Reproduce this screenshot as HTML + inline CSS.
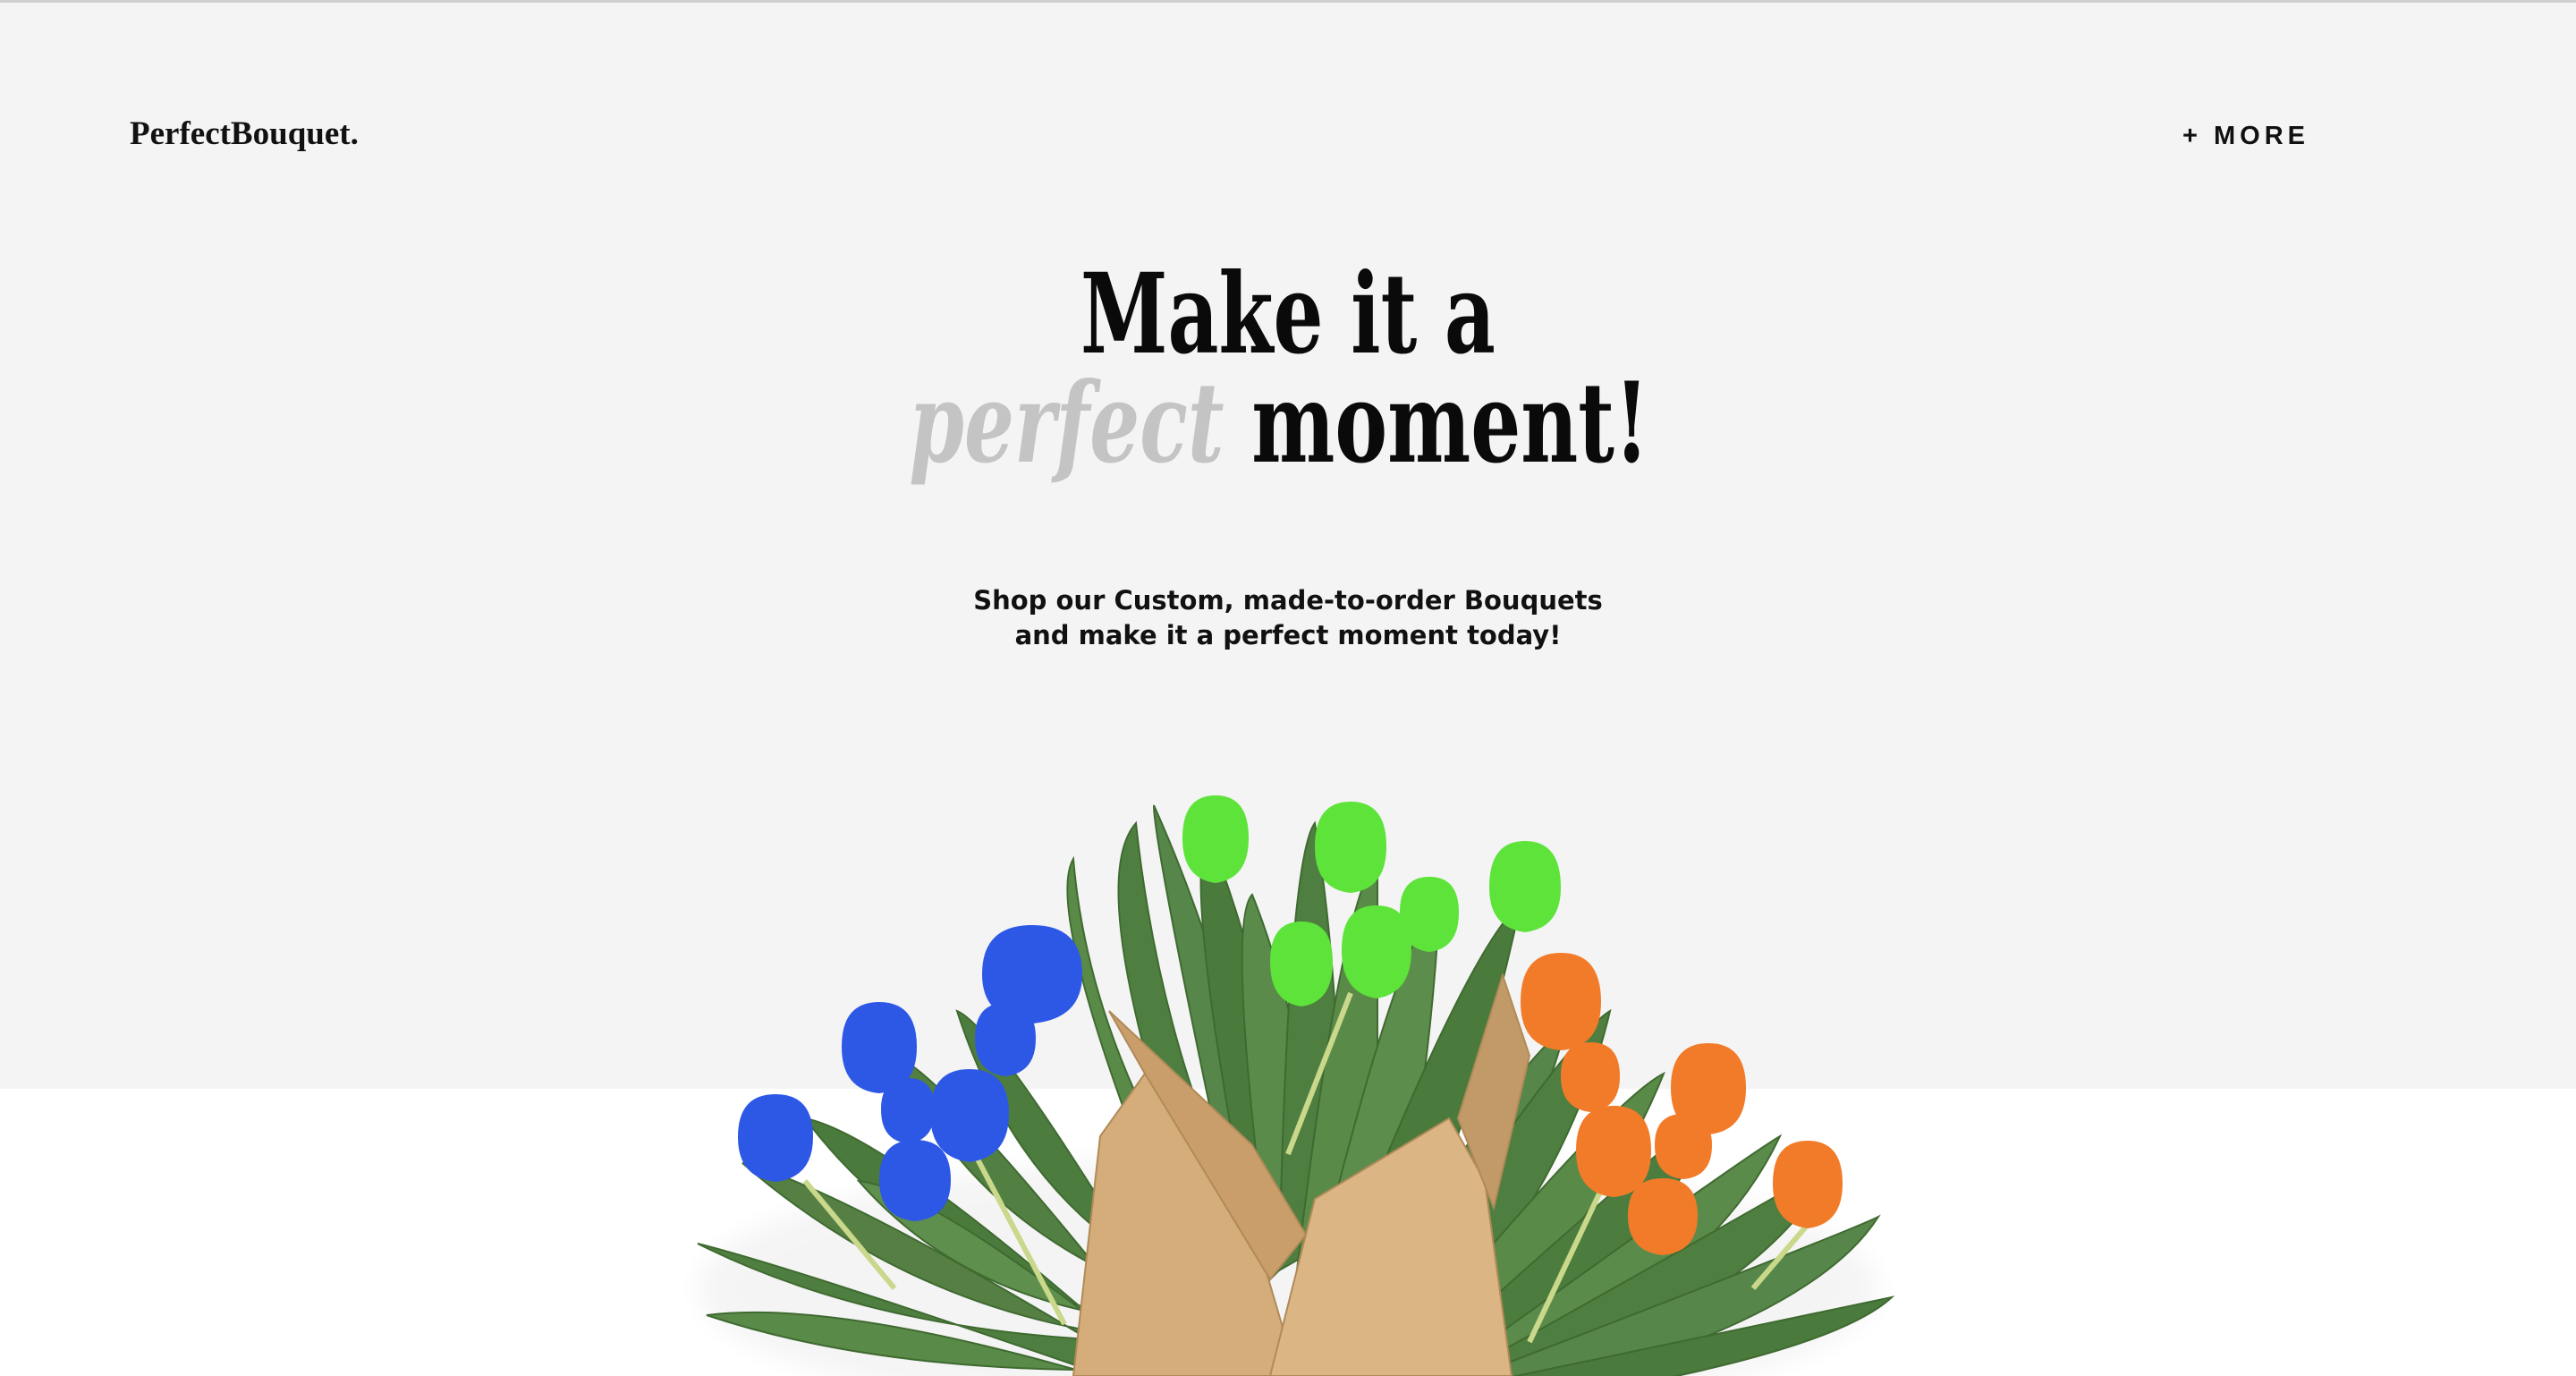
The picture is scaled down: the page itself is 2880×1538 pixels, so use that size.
<!DOCTYPE html>
<html><head><meta charset="utf-8">
<style>
html,body{margin:0;padding:0}
body{width:2880px;height:1538px;position:relative;overflow:hidden;background:#fff;font-family:"Liberation Sans",sans-serif}
.top{position:absolute;left:0;top:0;width:2880px;height:1217px;background:#f4f4f4;border-top:3px solid #cfcfcf;box-sizing:border-box}
.logo{position:absolute;left:145px;top:128px;font-family:"Liberation Serif",serif;font-weight:bold;font-size:37px;color:#111}
.more{position:absolute;left:2440px;top:136px;font-weight:bold;font-size:29px;letter-spacing:5px;color:#111}
.h{position:absolute;left:0;width:2880px;text-align:center;font-family:"DejaVu Serif",serif;font-weight:bold;font-size:124px;color:#0a0a0a;line-height:1;transform:scaleX(0.71);transform-origin:1440px 0}
.h i{color:#c4c4c4;font-weight:bold;font-style:italic}
.sub{position:absolute;left:0;top:652px;width:2880px;text-align:center;font-family:"DejaVu Sans",sans-serif;font-weight:bold;font-size:29px;line-height:39px;color:#111}
svg{position:absolute;left:0;top:0}
</style></head><body>
<div class="top"></div>
<div class="logo">PerfectBouquet.</div>
<div class="more">+ MORE</div>
<div class="h" style="top:290px">Make it a</div>
<div class="h" style="top:412px;left:-10px"><i>perfect</i> moment!</div>
<div class="sub">Shop our Custom, made-to-order Bouquets<br>and make it a perfect moment today!</div>
<svg width="2880" height="1538" viewBox="0 0 2880 1538">
<defs><filter id="b"><feGaussianBlur stdDeviation="14"/></filter></defs>
<ellipse cx="1440" cy="1440" rx="660" ry="150" fill="#000" opacity="0.04" filter="url(#b)"/>
<g stroke="#3f6a30" stroke-width="2">
<path d="M1300 1560 Q900 1420 780 1390 Q1000 1500 1320 1500Z" fill="#4f7f40"/>
<path d="M1300 1560 Q950 1450 790 1470 Q1000 1540 1310 1530Z" fill="#5a8a48"/>
<path d="M1320 1560 Q950 1330 830 1300 Q1050 1490 1340 1500Z" fill="#567f44"/>
<path d="M1320 1560 Q1000 1270 900 1250 Q1050 1450 1350 1490Z" fill="#4a7a3c"/>
<path d="M1330 1560 Q1050 1330 960 1320 Q1100 1480 1360 1480Z" fill="#5f8f4d"/>
<path d="M1340 1560 Q1060 1200 1000 1180 Q1100 1400 1370 1470Z" fill="#527f42"/>
<path d="M1350 1540 Q1120 1150 1070 1130 Q1150 1380 1380 1460Z" fill="#4d7d3e"/>
<path d="M1360 1500 Q1160 1030 1200 960 Q1220 1200 1400 1440Z" fill="#5a8a48"/>
<path d="M1380 1480 Q1200 1000 1270 920 Q1300 1200 1420 1420Z" fill="#4f7f40"/>
<path d="M1400 1460 Q1290 950 1290 900 Q1380 1100 1440 1400Z" fill="#56864a"/>
<path d="M1410 1440 Q1320 990 1350 930 Q1420 1100 1460 1390Z" fill="#4a7a3c"/>
<path d="M1420 1420 Q1370 1030 1400 1000 Q1460 1150 1480 1380Z" fill="#5b8b4a"/>
<path d="M1430 1420 Q1440 960 1470 920 Q1500 1100 1500 1380Z" fill="#4e7e40"/>
<path d="M1450 1420 Q1500 1000 1540 960 Q1540 1150 1540 1390Z" fill="#5a8a48"/>
<path d="M1470 1430 Q1560 1060 1610 1000 Q1600 1200 1560 1400Z" fill="#5d8d4c"/>
<path d="M1490 1440 Q1640 1060 1700 1010 Q1660 1200 1580 1410Z" fill="#4a7a3c"/>
<path d="M1520 1460 Q1700 1180 1750 1150 Q1710 1300 1610 1430Z" fill="#56864a"/>
<path d="M1540 1480 Q1750 1160 1800 1130 Q1760 1300 1630 1460Z" fill="#4f7f40"/>
<path d="M1560 1520 Q1800 1230 1860 1200 Q1800 1350 1660 1490Z" fill="#5a8a48"/>
<path d="M1570 1540 Q1880 1260 1930 1230 Q1860 1380 1680 1510Z" fill="#4d7d3e"/>
<path d="M1580 1560 Q1940 1300 1990 1270 Q1920 1420 1700 1530Z" fill="#5b8b4a"/>
<path d="M1590 1560 Q2000 1330 2050 1300 Q1980 1440 1720 1540Z" fill="#4f7f40"/>
<path d="M1590 1560 Q2060 1380 2100 1360 Q2030 1470 1740 1550Z" fill="#56864a"/>
<path d="M1590 1560 Q2070 1460 2115 1450 Q2050 1510 1760 1560Z" fill="#4a7a3c"/>
</g>
<g stroke="#c9d88a" stroke-width="6" fill="none">
<path d="M900 1320 L1000 1440"/><path d="M1090 1290 L1190 1480"/><path d="M1510 1110 L1440 1290"/><path d="M1790 1330 L1710 1500"/><path d="M2020 1370 L1960 1440"/>
</g>
<g stroke="#b08a58" stroke-width="2">
<path d="M1200 1538 L1230 1270 L1280 1200 L1380 1300 L1450 1538Z" fill="#d5ad7a"/>
<path d="M1420 1538 L1470 1340 L1620 1250 L1660 1320 L1690 1538Z" fill="#dbb583"/>
<path d="M1280 1200 L1240 1130 L1400 1280 L1460 1380 L1420 1430Z" fill="#c99e6a"/>
<path d="M1630 1250 L1680 1090 L1710 1180 L1670 1350Z" fill="#c29a68"/>
</g>
<g>
<g fill="#5ee33b"><path d="M1322 937 q0-48 37-48 q37 0 37 48 q0 45-37 50 q-37-5-37-50Z"/><path d="M1470 946 q0-50 40-50 q40 0 40 50 q0 48-40 52 q-40-4-40-52Z"/><path d="M1665 992 q0-52 40-52 q40 0 40 52 q0 45-40 50 q-40-5-40-50Z"/><path d="M1500 1062 q0-50 39-50 q39 0 39 50 q0 48-39 54 q-39-6-39-54Z"/><path d="M1420 1075 q0-45 35-45 q35 0 35 45 q0 45-35 50 q-35-5-35-50Z"/><path d="M1565 1020 q0-40 33-40 q33 0 33 40 q0 40-33 44 q-33-4-33-44Z"/></g>
<g fill="#2d58e6"><path d="M1098 1089 q0-55 56-55 q56 0 56 55 q0 50-56 55 q-56-5-56-55Z"/><path d="M941 1170 q0-50 42-50 q42 0 42 50 q0 48-42 52 q-42-4-42-52Z"/><path d="M825 1271 q0-48 42-48 q42 0 42 48 q0 45-42 50 q-42-5-42-50Z"/><path d="M1040 1245 q0-50 44-50 q44 0 44 50 q0 48-44 54 q-44-6-44-54Z"/><path d="M983 1319 q0-45 40-45 q40 0 40 45 q0 42-40 46 q-40-4-40-46Z"/><path d="M1090 1161 q0-40 34-40 q34 0 34 40 q0 38-34 42 q-34-4-34-42Z"/><path d="M985 1240 q0-35 30-35 q30 0 30 35 q0 35-30 38 q-30-3-30-38Z"/></g>
<g fill="#f17b29"><path d="M1700 1120 q0-55 45-55 q45 0 45 55 q0 50-45 54 q-45-4-45-54Z"/><path d="M1868 1216 q0-50 42-50 q42 0 42 50 q0 48-42 52 q-42-4-42-52Z"/><path d="M1762 1286 q0-50 42-50 q42 0 42 50 q0 48-42 52 q-42-4-42-52Z"/><path d="M1982 1323 q0-48 39-48 q39 0 39 48 q0 45-39 50 q-39-5-39-50Z"/><path d="M1820 1359 q0-42 39-42 q39 0 39 42 q0 40-39 44 q-39-4-39-44Z"/><path d="M1745 1203 q0-38 33-38 q33 0 33 38 q0 36-33 40 q-33-4-33-40Z"/><path d="M1850 1280 q0-35 32-35 q32 0 32 35 q0 35-32 38 q-32-3-32-38Z"/></g>
</g>
</svg>
</body></html>
